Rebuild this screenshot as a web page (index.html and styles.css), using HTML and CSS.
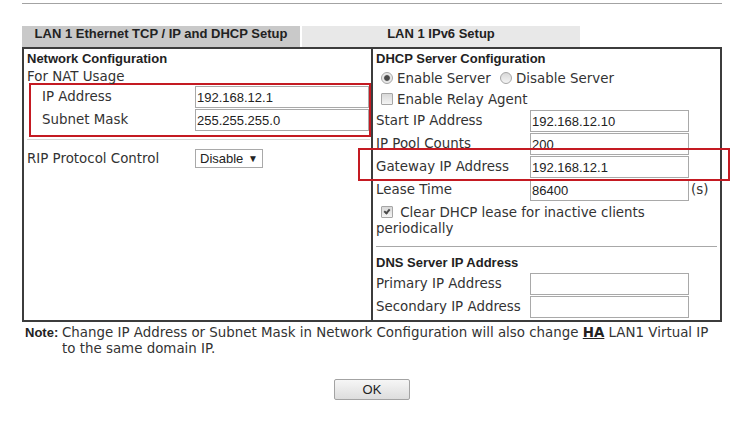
FILE: index.html
```html
<!DOCTYPE html>
<html lang="en">
<head>
<meta charset="UTF-8" />
<meta name="viewport" content="width=device-width, initial-scale=1" />
<title>LAN - General Setup</title>
<link rel="stylesheet" href="styles.css">
</head>
<body>
  <div class="page">
    <div class="rule"></div>

    <div class="tabs">
      <div class="tab tab-active">LAN 1 Ethernet TCP / IP and DHCP Setup</div>
      <div class="tab">LAN 1 IPv6 Setup</div>
    </div>

    <form class="panel">
      <!-- Sol sütun -->
      <section class="col col-left">
        <div class="heading heading-top">Network Configuration</div>
        <div class="line">For NAT Usage</div>
        <div class="mark mark-nat">
          <div class="row">
            <label for="ip">IP Address</label>
            <input class="field field-wide" id="ip" type="text" value="192.168.12.1">
          </div>
          <div class="row">
            <label for="mask">Subnet Mask</label>
            <input class="field field-wide" id="mask" type="text" value="255.255.255.0">
          </div>
        </div>
        <div class="sep"></div>
        <div class="row row-rip">
          <label>RIP Protocol Control</label>
          <div class="select">Disable <span class="caret">&#9660;</span></div>
        </div>
      </section>

      <!-- Sağ sütun -->
      <section class="col col-right">
        <div class="heading heading-top">DHCP Server Configuration</div>
        <div class="opts">
          <input class="radio" type="radio" name="dhcp" checked>Enable Server
          <input class="radio" type="radio" name="dhcp">Disable Server
        </div>
        <div class="opts opts-short">
          <input class="check" type="checkbox">Enable Relay Agent
        </div>
        <div class="row">
          <label for="start">Start IP Address</label>
          <input class="field" id="start" type="text" value="192.168.12.10">
        </div>
        <div class="row">
          <label for="pool">IP Pool Counts</label>
          <input class="field" id="pool" type="text" value="200">
        </div>
        <div class="row row-gw">
          <label for="gw">Gateway IP Address</label>
          <input class="field" id="gw" type="text" value="192.168.12.1">
          <div class="mark mark-gw"></div>
        </div>
        <div class="row">
          <label for="lease">Lease Time</label>
          <input class="field" id="lease" type="text" value="86400">
          <span class="unit">(s)</span>
        </div>
        <div class="clear">
          <input class="check" type="checkbox" checked> Clear DHCP lease for inactive clients periodically
        </div>
        <div class="divider"></div>
        <div class="heading">DNS Server IP Address</div>
        <div class="row">
          <label for="dns1">Primary IP Address</label>
          <input class="field" id="dns1" type="text" value="">
        </div>
        <div class="row">
          <label for="dns2">Secondary IP Address</label>
          <input class="field" id="dns2" type="text" value="">
        </div>
      </section>
    </form>

    <div class="note">
      <div class="note-label">Note:</div>
      <div class="note-text">
        <span>Change IP Address or Subnet Mask in Network Configuration will also change <a class="ha" href="#">HA</a> LAN1 Virtual IP</span><br>
        <span>to the same domain IP.</span>
      </div>
    </div>

    <div class="actions">
      <button class="btn" type="button">OK</button>
    </div>
  </div>
</body>
</html>
```

FILE: styles.css
```css
/* Temel */
*,
*::before,
*::after {
  box-sizing: border-box;
}

body {
  margin: 0;
  font-family: "DejaVu Sans", Verdana, sans-serif;
  font-size: 13.4px;
  color: #333;
  background-color: #fff;
}

.page {
  width: 700px;
  margin-left: 22px;
}

.rule {
  margin-top: 3px;
  height: 1px;
  background-color: #a3a3a3;
}

/* Sekmeler */
.tabs {
  display: flex;
  gap: 2px;
  margin-top: 22px;
}

.tab {
  width: 278px;
  height: 21px;
  line-height: 21px;
  text-align: center;
  font: bold 13px "Liberation Sans", Arial, sans-serif;
  color: #222;
  background-color: #e8e8e8;
}

.tab-active {
  background-color: #c9c9c9;
}

/* Panel */
.panel {
  display: grid;
  grid-template-columns: 349px 347px;
  border: 2px solid #3c3c3c;
  margin: 0;
}

.col {
  padding: 0 0 2px 3px;
}

.col-left {
  border-right: 2px solid #3c3c3c;
}

.heading {
  font: bold 13px/18px "Liberation Sans", Arial, sans-serif;
  color: #222;
}

.heading-top {
  height: 19px;
  line-height: 20px;
}

.line {
  line-height: 18px;
}

/* Kırmızı işaret kutuları */
.mark {
  border: 2px solid #c41a22;
}

.mark-nat {
  width: 342px;
  margin: -3px 0 0 2px;
  padding: 0 0 4px 11px;
}

.mark-gw {
  position: absolute;
  left: -18px;
  top: -7px;
  width: 372px;
  height: 33px;
  pointer-events: none;
}

/* Satırlar */
.row {
  display: flex;
  height: 23px;
}

.row label {
  flex: none;
  width: 154px;
  line-height: 24px;
  white-space: nowrap;
}

.mark-nat .row label {
  width: 153px;
}

.row-gw {
  position: relative;
}

.field {
  width: 159px;
  height: 22px;
  margin: 1px 0 0;
  padding: 0 1px;
  border: 1px solid #a9a9a9;
  border-radius: 0;
  font: 13px "Liberation Sans", Arial, sans-serif;
  color: #222;
  background-color: #fff;
  outline: none;
}

.field-wide {
  width: 174px;
}

.unit {
  margin-left: 2px;
  line-height: 23px;
}

.sep {
  height: 1px;
  margin: 2px 1px 0 0;
  background-color: #d6d6d6;
}

.row-rip {
  height: auto;
  padding-top: 9px;
}

.row-rip label {
  width: 168px;
  line-height: 20px;
}

.select {
  width: 68px;
  height: 19px;
  padding-left: 4px;
  border: 1px solid #a9a9a9;
  font: 13px/17px "Liberation Sans", Arial, sans-serif;
  color: #222;
}

.caret {
  margin-left: 1px;
  font-size: 10px;
  vertical-align: 1px;
}

/* Radio ve checkbox */
.opts {
  height: 21px;
  line-height: 22px;
  white-space: nowrap;
}

.opts-short {
  height: 20px;
}

.radio,
.check {
  appearance: none;
  -webkit-appearance: none;
  display: inline-block;
  position: relative;
  width: 12px;
  height: 12px;
  margin: 0 4px 0 5px;
  vertical-align: -1px;
  border: 1px solid #a6a6a6;
  background: linear-gradient(#d8d8d8, #f4f4f4);
}

.radio {
  border-radius: 50%;
}

.radio:checked {
  background: radial-gradient(circle, #4a4a4a 0 2.4px, #9a9a9a 2.9px, #e6e6e6 3.6px, #f4f4f4);
}

.check {
  border-radius: 1px;
}

.check:checked::after {
  content: "";
  position: absolute;
  left: 3px;
  top: 1px;
  width: 4px;
  height: 6px;
  border: solid #4a4a4a;
  border-width: 0 2px 2px 0;
  transform: rotate(40deg);
}

.clear {
  padding-top: 4px;
  line-height: 16px;
}

.clear .check {
  margin-right: 3px;
}

.divider {
  width: 341px;
  height: 1px;
  margin: 9px 0 7px;
  background-color: #a8a8a8;
}

/* Not */
.note {
  display: flex;
  margin: 3px 0 0 3px;
  line-height: 16px;
}

.note-label {
  flex: none;
  width: 37px;
  font: bold 13px/16px "Liberation Sans", Arial, sans-serif;
  color: #222;
}

.note-text {
  white-space: nowrap;
}

.ha {
  font-weight: bold;
  color: #222;
  text-decoration: underline;
}

/* Buton */
.actions {
  margin-top: 22px;
  text-align: center;
}

.btn {
  width: 76px;
  height: 21px;
  padding: 0;
  border: 1px solid #a3a3a3;
  border-radius: 2px;
  font: 13px "Liberation Sans", Arial, sans-serif;
  color: #222;
  background: linear-gradient(#f6f6f6, #dddddd);
  cursor: pointer;
}
```
